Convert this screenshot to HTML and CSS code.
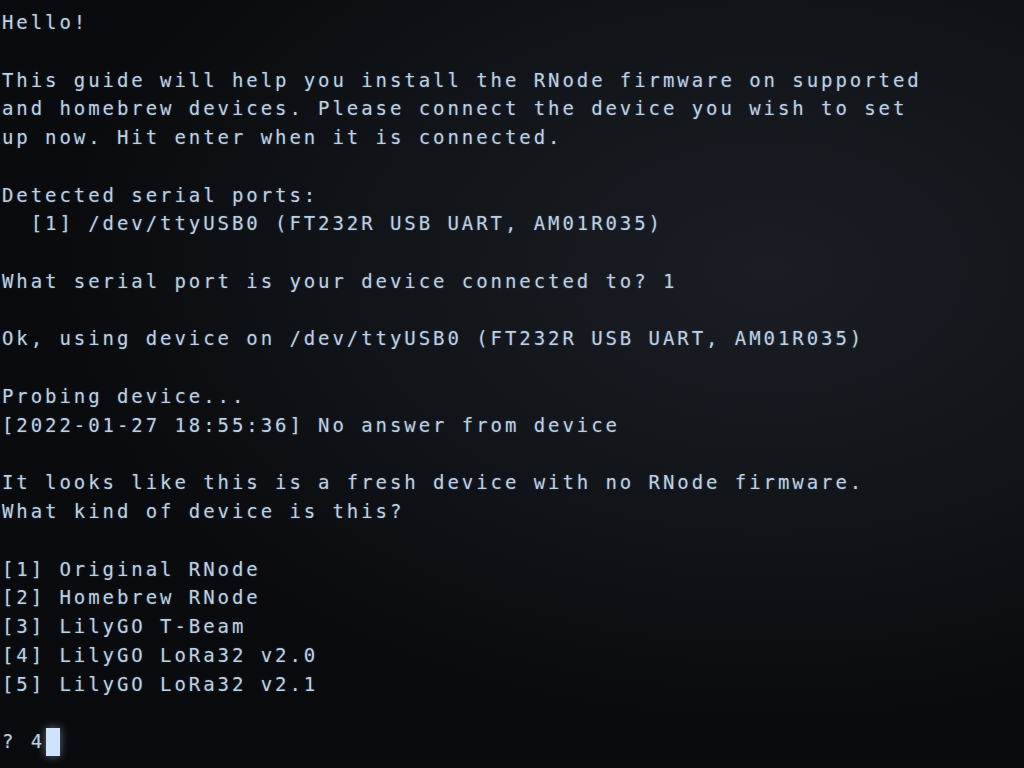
FILE: index.html
```html
<!DOCTYPE html>
<html lang="en">

<head>
    <meta charset="UTF-8">
    <title>rnodeconf</title>
    <link rel="stylesheet" href="styles.css">
</head>

<body>
    <pre class="term">Hello!

This guide will help you install the RNode firmware on supported
and homebrew devices. Please connect the device you wish to set
up now. Hit enter when it is connected.

Detected serial ports:
  [1] /dev/ttyUSB0 (FT232R USB UART, AM01R035)

What serial port is your device connected to? 1

Ok, using device on /dev/ttyUSB0 (FT232R USB UART, AM01R035)

Probing device...
[2022-01-27 18:55:36] No answer from device

It looks like this is a fresh device with no RNode firmware.
What kind of device is this?

[1] Original RNode
[2] Homebrew RNode
[3] LilyGO T-Beam
[4] LilyGO LoRa32 v2.0
[5] LilyGO LoRa32 v2.1

? 4<span class="cursor"></span></pre>
</body>

</html>
```

FILE: styles.css
```css
html,
body {
    margin: 0;
    padding: 0;
    height: 100%;
}

body {
    background-color: #0c0f13;
    background-image: radial-gradient(ellipse 70% 60% at 75% 35%, #1a1e24 0%, #111419 55%, #090b0e 100%);
    overflow: hidden;
}

.term {
    margin: 0;
    padding: 8px 0 0 2px;
    font-family: "DejaVu Sans Mono", monospace;
    font-size: 19px;
    letter-spacing: 2.93px;
    line-height: 28.77px;
    color: #bcd0e2;
    text-shadow: 0 0 2px rgba(170, 200, 235, 0.3);
}

.cursor {
    display: inline-block;
    width: 14px;
    height: 28px;
    margin-left: 1px;
    vertical-align: -8px;
    background-color: #cfe3fb;
    box-shadow: 0 0 8px rgba(180, 210, 250, 0.5);
}
```
